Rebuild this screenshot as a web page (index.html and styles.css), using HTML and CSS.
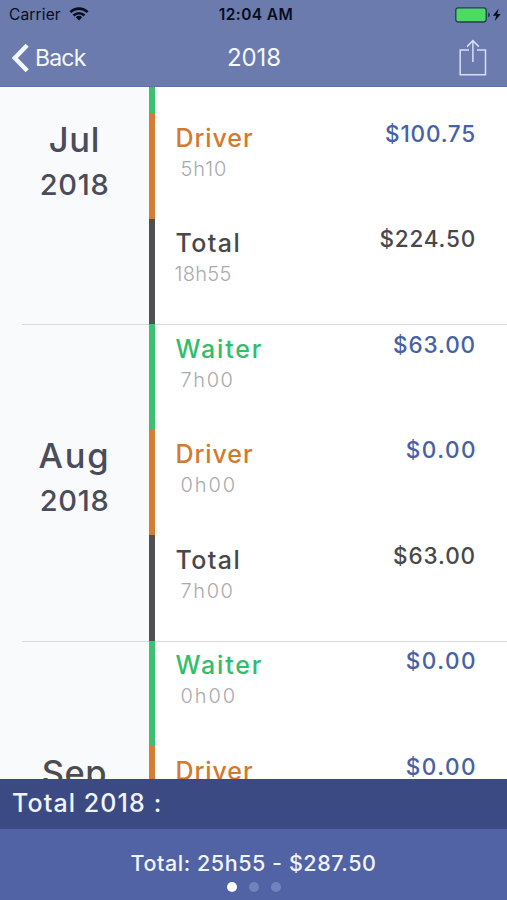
FILE: index.html
```html
<!DOCTYPE html>
<html lang="en">
<head>
<meta charset="utf-8">
<title>2018</title>
<link rel="stylesheet" href="styles.css">
</head>
<body>
<div class="app">
  <header class="header">
    <div class="status">
      <div class="carrier"><span class="carrier-name">Carrier</span>
        <svg class="wifi" viewBox="0 0 20 14" width="20" height="14"><g fill="none" stroke="#080d20" stroke-width="2.6"><path d="M1.4 5.2a12.2 12.2 0 0 1 17.2 0"/><path d="M4.5 8.5a7.8 7.8 0 0 1 11 0"/></g><path d="M6.8 10.2a4.5 4.5 0 0 1 6.4 0L10 13.6z" fill="#080d20"/></svg>
      </div>
      <div class="clock">12:04 AM</div>
      <div class="power">
        <svg viewBox="0 0 48 16" width="48" height="16"><rect x=".8" y=".8" width="30.4" height="14.2" rx="2.4" fill="#4cda64" stroke="#29385b" stroke-width="1.3"/><path d="M33 5.5q2 .5 2 2.4t-2 2.4z" fill="#29385b"/><path d="M43.6 1.8 37.8 8.7h3.4l-1.4 5.4 6-7.1h-3.5z" fill="#080d20"/></svg>
      </div>
    </div>
    <nav class="nav">
      <div class="back"><svg viewBox="0 0 18 30" width="18" height="30"><path d="M15.2 2.2 2.8 15l12.4 12.8" fill="none" stroke="#f4f8ff" stroke-width="4.4"/></svg><span class="back-label">Back</span></div>
      <div class="title">2018</div>
      <div class="share"><svg viewBox="0 0 28 38" width="28" height="38"><g fill="none" stroke="#d6def8" stroke-width="1.5"><path d="M10 11H1.2v24.8h25.3V11H18"/><path d="M13.9 23V1.6M8 7.6l5.9-6 5.9 6"/></g></svg></div>
    </nav>
  </header>

  <main class="list">
    <section class="month scrolled">
      <div class="date"><div class="name jul">Jul</div><div class="year">2018</div></div>
      <div class="rows">
        <div class="row waiter"></div>
        <div class="row driver"><div><div class="job">Driver</div><div class="hours">5h10</div></div><div class="amount">$100.75</div></div>
        <div class="row total"><div><div class="job">Total</div><div class="hours long">18h55</div></div><div class="amount">$224.50</div></div>
      </div>
    </section>
    <section class="month">
      <div class="date"><div class="name">Aug</div><div class="year">2018</div></div>
      <div class="rows">
        <div class="row waiter"><div><div class="job">Waiter</div><div class="hours round">7h00</div></div><div class="amount tens">$63.00</div></div>
        <div class="row driver"><div><div class="job">Driver</div><div class="hours zero">0h00</div></div><div class="amount none">$0.00</div></div>
        <div class="row total"><div><div class="job">Total</div><div class="hours round">7h00</div></div><div class="amount tens">$63.00</div></div>
      </div>
    </section>
    <section class="month">
      <div class="date"><div class="name sep">Sep</div></div>
      <div class="rows">
        <div class="row waiter"><div><div class="job">Waiter</div><div class="hours zero">0h00</div></div><div class="amount none">$0.00</div></div>
        <div class="row driver"><div><div class="job">Driver</div></div><div class="amount none">$0.00</div></div>
        <div class="row total"></div>
      </div>
    </section>
  </main>

  <footer class="footer">
    <div class="footer-head">Total 2018 :</div>
    <div class="footer-body">
      <div class="sum">Total: 25h55 - $287.50</div>
      <div class="dots"><i class="dot on"></i><i class="dot"></i><i class="dot"></i></div>
    </div>
  </footer>
</div>
</body>
</html>
```

FILE: styles.css
```css
* { box-sizing: border-box; }
body { margin: 0; font-family: Inter, "Liberation Sans", sans-serif; }
.app { width: 507px; height: 900px; display: flex; flex-direction: column; overflow: hidden; background: #fff; }

.header { height: 87px; flex: none; background: #6b7bad; border-bottom: 1px solid #6271a5; }
.status { height: 29px; display: grid; grid-template-columns: 1fr auto 1fr; align-items: center; padding: 0 4px 0 9px; color: #080d20; font-size: 15.5px; }
.carrier { display: flex; align-items: center; gap: 8px; letter-spacing: .15px; }
.wifi { display: block; margin-top: -2px; }
.clock { font-weight: 600; font-size: 15.5px; letter-spacing: .4px; }
.power { display: flex; justify-content: flex-end; }
.power svg { display: block; }
.nav { height: 57px; display: grid; grid-template-columns: 1fr auto 1fr; align-items: center; padding: 0 20px 0 12px; color: #f4f8ff; font-size: 23px; }
.back { display: flex; align-items: center; gap: 5px; }
.back-label { letter-spacing: -.8px; }
.title { font-size: 24px; letter-spacing: -.1px; padding-left: 9px; }
.share { display: flex; justify-content: flex-end; }

.list { flex: none; height: 692px; overflow: hidden; }
.month { height: 316.4px; display: flex; background: linear-gradient(#d9dadd, #d9dadd) 22px 0 / 100% 1px no-repeat #f8fafc; }
.scrolled { margin-top: -79px; }
.date { width: 149px; flex: none; padding-top: 112px; text-align: center; color: #4a4c5a; font-weight: 550; }
.name { height: 40px; line-height: 40px; font-size: 34.5px; letter-spacing: 1.8px; }
.name.jul { letter-spacing: .8px; }
.name.sep { color: #4b4c50; letter-spacing: .5px; }
.year { margin-top: 7px; height: 36px; line-height: 36px; font-size: 29px; letter-spacing: .7px; }
.rows { flex: 1; display: flex; flex-direction: column; background: linear-gradient(#d9dadd, #d9dadd) 0 0 / 100% 1px no-repeat #fff; }
.row { flex: 1 1 0; min-height: 0; display: flex; justify-content: space-between; padding: 9.3px 31px 0 20.5px; border-left: 6px solid; }
.waiter { border-color: #3bc171; }
.driver { border-color: #d67d33; }
.total { border-color: #505052; }
.job { height: 30px; line-height: 30px; font-size: 25px; font-weight: 550; letter-spacing: .9px; }
.waiter .job { color: #32bd6b; letter-spacing: 1.8px; }
.driver .job { color: #d3792f; }
.total .job { color: #48484a; letter-spacing: 1.4px; }
.hours { margin: 4px 0 0 5px; height: 24px; line-height: 24px; font-size: 20px; font-weight: 350; letter-spacing: .9px; color: #a9aaae; }
.hours.long { margin-left: -1px; letter-spacing: .3px; }
.hours.round { letter-spacing: 1.6px; }
.hours.zero { letter-spacing: 1.9px; }
.amount { margin-top: -3px; height: 28px; line-height: 28px; font-size: 22.5px; font-weight: 550; letter-spacing: .8px; color: #4661a6; }
.amount.tens { letter-spacing: .9px; }
.amount.none { letter-spacing: 1.5px; margin-right: -1px; }
.total .amount { color: #48484a; }

.footer { flex: 1; display: flex; flex-direction: column; color: #f0f5ff; font-weight: 550; }
.footer-head { height: 49.5px; padding-left: 12px; line-height: 48px; font-size: 25px; letter-spacing: 1.1px; background: #3c4a83; }
.footer-body { flex: 1; background: #5263a5; display: flex; flex-direction: column; align-items: center; padding-top: 20px; }
.sum { height: 28px; line-height: 28px; font-size: 21.5px; letter-spacing: .55px; }
.dots { display: flex; gap: 12px; margin-top: 5px; }
.dot { width: 10px; height: 10px; border-radius: 50%; background: #7182bd; }
.dot.on { background: #fff; }
```
